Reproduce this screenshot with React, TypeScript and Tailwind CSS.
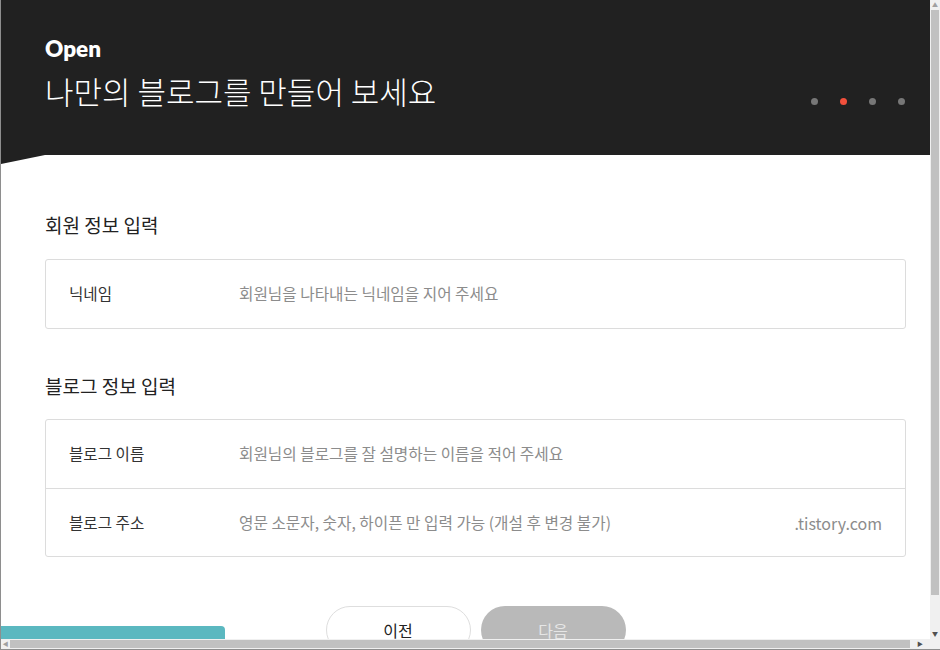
import React from 'react';

const font = { fontFamily: '"Noto Sans CJK KR", "Noto Sans", sans-serif' };

interface Field {
  label: string;
  placeholder: string;
  suffix?: string;
}

const memberFields: Field[] = [{ label: '닉네임', placeholder: '회원님을 나타내는 닉네임을 지어 주세요' }];

const blogFields: Field[] = [
  { label: '블로그 이름', placeholder: '회원님의 블로그를 잘 설명하는 이름을 적어 주세요' },
  { label: '블로그 주소', placeholder: '영문 소문자, 숫자, 하이픈 만 입력 가능 (개설 후 변경 불가)', suffix: '.tistory.com' },
];

const FieldBox: React.FC<{ fields: Field[] }> = ({ fields }) => (
  <div className="mr-[24px] rounded-[3px] border border-[#dcdcdc] bg-white">
    {fields.map((f, i) => (
      <div
        key={f.label}
        className={`flex h-[68px] items-center pl-[23px] pr-[23px] ${i > 0 ? 'border-t border-[#dcdcdc]' : ''}`}
      >
        <span className="w-[170px] shrink-0 text-[15.6px] text-[#333]">{f.label}</span>
        <span className="flex-1 text-[15.7px] text-[#8c8c8c]">{f.placeholder}</span>
        {f.suffix && <span className="text-[16px] text-[#8c8c8c]">{f.suffix}</span>}
      </div>
    ))}
  </div>
);

const App: React.FC = () => {
  return (
    <div className="flex h-[650px] w-[940px] flex-col overflow-hidden border-l border-[#8e8e8e] bg-white" style={font}>
      <div className="flex h-[639px]">
        <div className="relative flex-1 overflow-hidden">
          <header className="flex h-[155px] bg-[#212121] pl-[44px] pr-[25px]">
            <div className="flex-1 pt-[35px]">
              <div className="text-[22.5px] font-extrabold leading-[28px] text-white" style={{ fontFamily: 'Lato, "Noto Sans", sans-serif' }}>
                Open
              </div>
              <h1 className="mt-[8px] text-[31px] font-light leading-[40px] text-white">나만의 블로그를 만들어 보세요</h1>
            </div>
            <div className="flex items-center gap-[22px] self-start pt-[98px]">
              <span className="h-[7px] w-[7px] rounded-full bg-[#777]" />
              <span className="h-[7px] w-[7px] rounded-full bg-[#f2503c]" />
              <span className="h-[7px] w-[7px] rounded-full bg-[#777]" />
              <span className="h-[7px] w-[7px] rounded-full bg-[#777]" />
            </div>
          </header>
          <svg width="44" height="9" viewBox="0 0 44 9" className="block">
            <polygon points="0,0 44,0 0,9" fill="#212121" />
          </svg>

          <main className="pl-[44px]">
            <h2 className="mt-[47px] text-[19px] leading-[28px] text-[#222]">회원 정보 입력</h2>
            <div className="mt-[20px]">
              <FieldBox fields={memberFields} />
            </div>

            <h2 className="mt-[43px] text-[19px] leading-[28px] text-[#222]">블로그 정보 입력</h2>
            <div className="mt-[19px]">
              <FieldBox fields={blogFields} />
            </div>

            <div className="mt-[49px] flex justify-center gap-[10px] pr-[24px]">
              <button className="h-[48px] w-[145px] rounded-full border border-[#dedede] bg-white text-[16px] leading-none text-[#222]">
                이전
              </button>
              <button className="h-[48px] w-[145px] rounded-full bg-[#b9b9b9] text-[16px] leading-none text-[#e6e6e6]">다음</button>
            </div>
          </main>

          <div className="absolute bottom-0 left-0 h-[13px] w-[224px] rounded-tr-[4px] bg-[#5bb8c0]" />
        </div>

        {/* vertical scrollbar */}
        <div className="flex w-[10px] flex-col bg-[#f0f0f0]">
          <div className="flex h-[10px] items-center justify-center text-[6px] leading-none text-[#a0a0a0]">▲</div>
          <div className="mx-[1px] h-[585px] bg-[#c1c1c1]" />
          <div className="flex-1" />
          <div className="flex h-[10px] items-center justify-center text-[6px] leading-none text-[#505050]">▼</div>
        </div>
      </div>

      {/* horizontal scrollbar */}
      <div className="flex h-[11px] border-b border-[#8e8e8e] bg-[#f0f0f0]">
        <div className="flex w-[9px] items-center justify-center text-[6px] leading-none text-[#a0a0a0]">◀</div>
        <div className="my-[1px] w-[900px] bg-[#c1c1c1]" />
        <div className="flex flex-1 items-center justify-center text-[6px] leading-none text-[#505050]">▶</div>
        <div className="w-[10px] bg-[#f0f0f0]" />
      </div>
    </div>
  );
};

export default App;
